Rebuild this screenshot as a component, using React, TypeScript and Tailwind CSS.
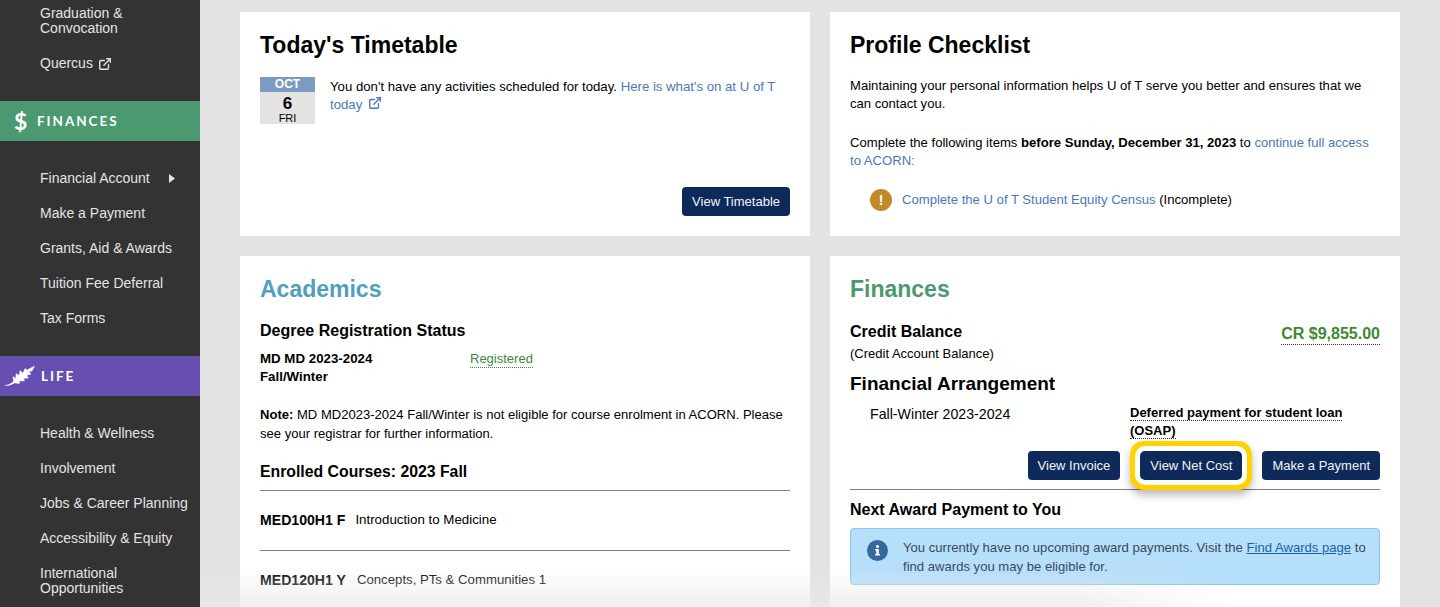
import React from "react";
import { ExternalLink } from "lucide-react";

function NavItem({ children }: { children: React.ReactNode }) {
  return <div className="pl-10 pr-2 text-[14px] leading-[15px] text-[#e3e3e3]">{children}</div>;
}

function NavList({ items }: { items: React.ReactNode[] }) {
  return (
    <div className="flex flex-col gap-5 py-[30px]">
      {items.map((item, i) => (
        <NavItem key={i}>{item}</NavItem>
      ))}
    </div>
  );
}

function Leaf() {
  return (
    <svg width="30" height="20" viewBox="0 0 30 20" className="shrink-0 text-white" aria-hidden="true">
      <path
        d="M0 19.500 C3 19 6 18 8.500 15.500 L8 10.500 L10.800 12.500 L11 7.500 L14 9.500 L15 4.500 L18 7 L20 2.500 L22 4 L29.500 0 L27 5 L24 5.500 L26 8 L21.500 9.500 L23.500 12 L18.500 12.500 L19.500 15 L14.500 15 L14.500 17.500 L9.500 17 C6 19 3 19.800 0 19.500Z"
        fill="currentColor"
        stroke="currentColor"
        strokeWidth="0.4"
        strokeLinejoin="round"
      />
    </svg>
  );
}

function Card({ className, children }: { className?: string; children: React.ReactNode }) {
  return <section className={"bg-white px-5 pt-[19px] " + (className ?? "")}>{children}</section>;
}

function Btn({ children, highlight }: { children: React.ReactNode; highlight?: boolean }) {
  return (
    <button
      className={
        "h-[29px] whitespace-nowrap bg-[#0e2a5a] px-[10px] text-[13px] text-[#f2f4f7] " +
        (highlight
          ? "rounded-[5px] shadow-[0_0_0_5px_#ffffff,0_0_0_10px_#ffd200,0_5px_9px_10px_rgba(0,0,0,0.28)]"
          : "rounded-[4px]")
      }
    >
      {children}
    </button>
  );
}

const linkCls = "text-[#4a78bd]";

export default function App() {
  return (
    <div className="relative flex h-[607px] w-[1440px] overflow-hidden bg-[#e3e3e3] font-['Liberation_Sans',Arial,sans-serif] text-black">
      <aside className="w-[200px] shrink-0 bg-[#333333] pt-[6px]">
        <div className="flex flex-col gap-5 pb-[30px]">
          <NavItem>
            Graduation &amp;
            <br />
            Convocation
          </NavItem>
          <NavItem>
            <span className="inline-flex items-center gap-[5px]">
              Quercus <ExternalLink size={14} strokeWidth={2.4} />
            </span>
          </NavItem>
        </div>
        <div className="flex h-10 items-center bg-[#4a9970] pl-[14px] text-white">
          <span className="w-[23px] font-['Lato',sans-serif] text-[23px] font-bold leading-none">$</span>
          <span className="font-['Lato',sans-serif] text-[13.5px] font-bold tracking-[1.95px]">FINANCES</span>
        </div>
        <NavList
          items={[
            <span className="flex items-center">
              Financial Account
              <svg width="6" height="9" viewBox="0 0 6 9" className="ml-[19px]" aria-hidden="true">
                <path d="M0 0 L6 4.500 L0 9Z" fill="#e3e3e3" />
              </svg>
            </span>,
            "Make a Payment",
            "Grants, Aid & Awards",
            "Tuition Fee Deferral",
            "Tax Forms",
          ]}
        />
        <div className="flex h-10 items-center gap-[6px] bg-[#674eb1] pl-[5px] text-white">
          <Leaf />
          <span className="font-['Lato',sans-serif] text-[13.5px] font-bold tracking-[1.95px]">LIFE</span>
        </div>
        <NavList
          items={[
            "Health & Wellness",
            "Involvement",
            "Jobs & Career Planning",
            "Accessibility & Equity",
            <>
              International
              <br />
              Opportunities
            </>,
          ]}
        />
      </aside>

      <main className="grid flex-1 grid-cols-[570px_570px] content-start gap-5 pl-10 pt-3">
        <Card className="flex h-[224px] flex-col pb-5">
          <h2 className="text-[23px] font-bold leading-7">Today's Timetable</h2>
          <div className="mt-[18px] flex flex-1 gap-[15px]">
            <div className="h-[47px] w-[55px] shrink-0 bg-[#e3e3e3] text-center">
              <div className="h-[15px] bg-[#7c9bc2] text-[12px] font-bold leading-[15px] text-white">OCT</div>
              <div className="pt-[2px] text-[17px] font-bold leading-[20px]">6</div>
              <div className="text-[11px] leading-[9px]">FRI</div>
            </div>
            <p className="mt-[1px] text-[13.2px] leading-[18px]">
              You don't have any activities scheduled for today.{" "}
              <span className={linkCls}>
                Here is what's on at U of T today{" "}
                <ExternalLink size={14} strokeWidth={2.4} className="ml-[2px] inline align-[-1px]" />
              </span>
            </p>
          </div>
          <div className="flex justify-end">
            <Btn>View Timetable</Btn>
          </div>
        </Card>

        <Card className="h-[224px]">
          <h2 className="text-[23px] font-bold leading-7">Profile Checklist</h2>
          <div className="mt-[18px] text-[13.1px] leading-[18px]">
            <p>Maintaining your personal information helps U of T serve you better and ensures that we can contact you.</p>
            <p className="mt-[21px]">
              Complete the following items <b>before Sunday, December 31, 2023</b> to{" "}
              <span className={linkCls}>continue full access to ACORN:</span>
            </p>
            <div className="mt-[19px] flex items-center gap-[10px] pl-5">
              <span className="flex h-[22px] w-[22px] items-center justify-center rounded-full bg-[#c08a2b] text-[14px] font-bold text-white">
                !
              </span>
              <span>
                <span className={linkCls}>Complete the U of T Student Equity Census</span> (Incomplete)
              </span>
            </div>
          </div>
        </Card>

        <Card className="h-[360px]">
          <h2 className="text-[23px] font-bold leading-7 text-[#4f9fbf]">Academics</h2>
          <h3 className="mt-[18px] text-[16px] font-bold leading-[20px]">Degree Registration Status</h3>
          <div className="mt-[9px] flex text-[13.3px] leading-[18px]">
            <b className="w-[210px]">
              MD MD 2023-2024
              <br />
              Fall/Winter
            </b>
            <span className="h-[18px] border-b border-dotted border-[#3c8a3c] text-[13px] text-[#3c8a3c]">Registered</span>
          </div>
          <p className="mt-[19px] text-[13.05px] leading-[19px]">
            <b>Note:</b> MD MD2023-2024 Fall/Winter is not eligible for course enrolment in ACORN. Please see your registrar for further information.
          </p>
          <h3 className="mt-[19px] border-b border-[#808080] pb-[8px] text-[15.8px] font-bold leading-[20px]">
            Enrolled Courses: 2023 Fall
          </h3>
          <div className="flex h-[60px] items-center gap-[10px] border-b border-[#808080] text-[13.3px]">
            <b className="text-[14.1px]">MED100H1 F</b>
            <span className="-mt-[2px]">Introduction to Medicine</span>
          </div>
          <div className="flex h-[59px] items-center gap-[11px] text-[13.2px]">
            <b className="text-[14.1px]">MED120H1 Y</b>
            <span className="-mt-[2px]">Concepts, PTs &amp; Communities 1</span>
          </div>
        </Card>

        <Card className="h-[360px]">
          <h2 className="text-[23px] font-bold leading-7 text-[#4a9970]">Finances</h2>
          <div className="mt-[19px] flex items-start justify-between">
            <div>
              <h3 className="text-[16px] font-bold leading-[20px]">Credit Balance</h3>
              <div className="mt-[3px] text-[13px] leading-[18px]">(Credit Account Balance)</div>
            </div>
            <span className="mt-[2px] border-b border-dotted border-[#333] text-[16px] font-bold leading-[20px] text-[#3c8a2e]">
              CR $9,855.00
            </span>
          </div>
          <h3 className="mt-[10px] text-[19px] font-bold leading-[22px]">Financial Arrangement</h3>
          <div className="mt-[10px] flex pl-5 text-[14.2px] leading-[18px]">
            <span className="w-[260px] shrink-0">Fall-Winter 2023-2024</span>
            <b className="-mt-[1px] text-[13px]">
              <span className="border-b border-dotted border-[#333]">Deferred payment for student loan</span>
              <br />
              <span className="border-b border-dotted border-[#333]">(OSAP)</span>
            </b>
          </div>
          <div className="mt-[11px] flex justify-end gap-5 border-b border-[#808080] pb-[9px]">
            <Btn>View Invoice</Btn>
            <Btn highlight>View Net Cost</Btn>
            <Btn>Make a Payment</Btn>
          </div>
          <h3 className="mt-[10px] text-[16px] font-bold leading-[20px]">Next Award Payment to You</h3>
          <div className="mt-[8px] flex h-[57px] items-center gap-[15px] rounded-[4px] border border-[#8cc4ee] bg-[#b5dffb] pl-[16px] pr-2 text-[13.1px] leading-[19px] text-[#37495c]">
            <svg width="21" height="21" viewBox="0 0 21 21" className="-mt-[12px] shrink-0" aria-hidden="true">
              <circle cx="10.500" cy="10.500" r="10.500" fill="#34689f" />
              <path d="M8 9 H11.800 V14 H13 V15.500 H8 V14 H9.300 V10.500 H8Z" fill="#fff" />
              <circle cx="10.500" cy="6.500" r="1.500" fill="#fff" />
            </svg>
            <p>
              You currently have no upcoming award payments. Visit the{" "}
              <span className="text-[#1f5fa8] underline">Find Awards page</span> to find awards you may be eligible for.
            </p>
          </div>
        </Card>
      </main>
      <div className="pointer-events-none absolute bottom-0 left-[200px] h-10 w-[1040px] bg-gradient-to-b from-transparent to-[#e9e9e9]/70 [mask-image:linear-gradient(to_right,black_85%,transparent)]" />
    </div>
  );
}
